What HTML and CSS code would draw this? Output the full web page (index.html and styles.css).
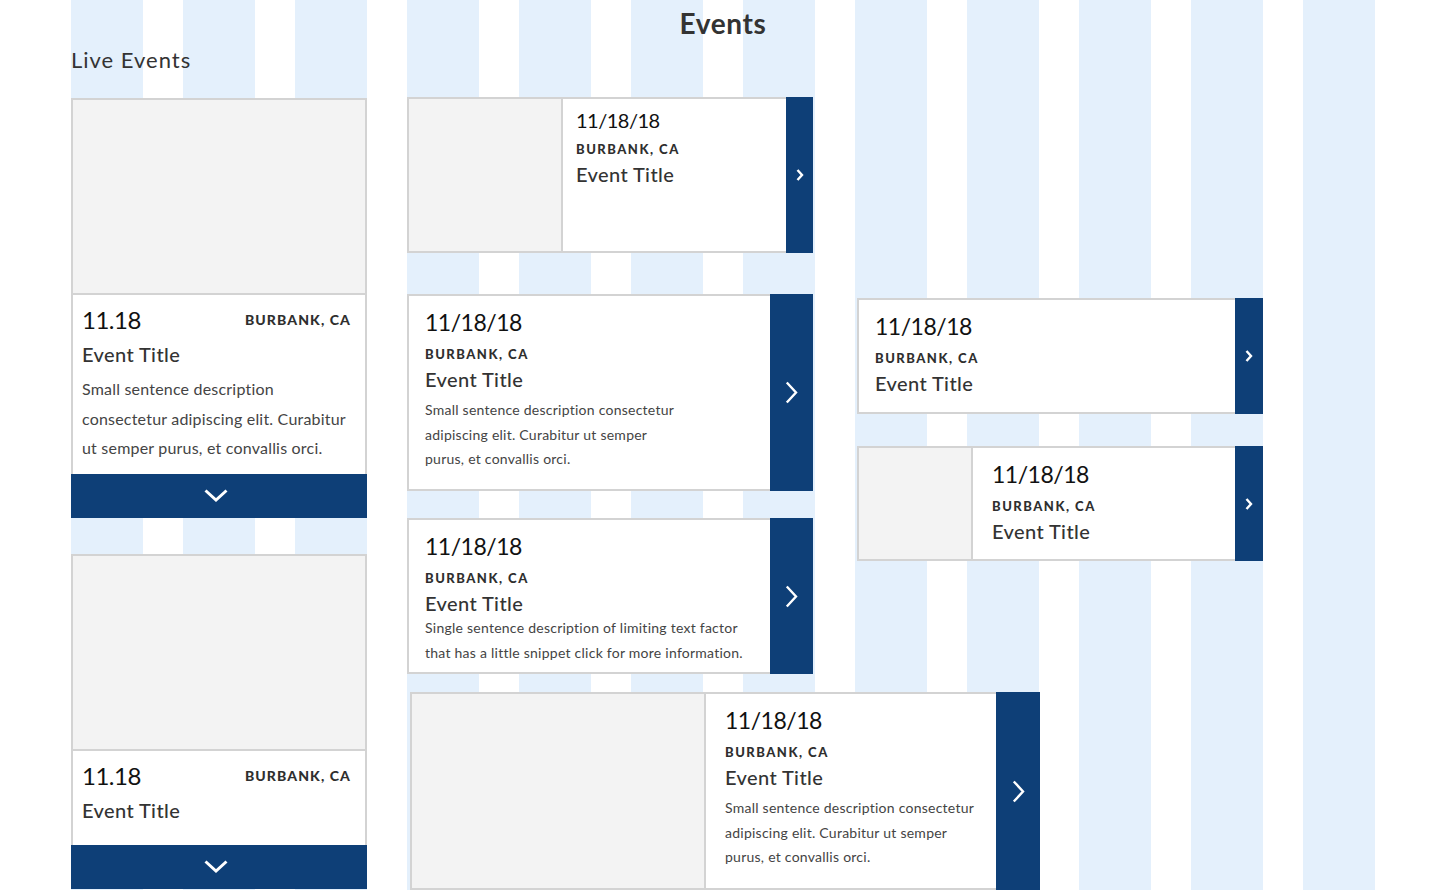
FILE: index.html
```html
<!DOCTYPE html>
<html lang="en">
<head>
<meta charset="utf-8">
<title>Events</title>
<link rel="stylesheet" href="styles.css">
</head>
<body>
<main class="page">
  <section class="col col-live">
    <h2 class="live-title">Live Events</h2>

    <article class="vcard">
      <div class="vcard-img"></div>
      <div class="vcard-body">
        <div class="vcard-meta"><span class="vdate">11.18</span><span class="loc vloc">BURBANK, CA</span></div>
        <h3 class="vtitle">Event Title</h3>
        <p class="vdesc">Small sentence description<br>consectetur adipiscing elit. Curabitur<br>ut semper purus, et convallis orci.</p>
      </div>
      <div class="vcard-toggle">
        <svg width="24" height="13" viewBox="0 0 24 13"><path d="M1.5 1.5 L12 11 L22.5 1.5" fill="none" stroke="#fff" stroke-width="3"/></svg>
      </div>
    </article>

    <article class="vcard vcard-second">
      <div class="vcard-img"></div>
      <div class="vcard-body">
        <div class="vcard-meta"><span class="vdate">11.18</span><span class="loc vloc">BURBANK, CA</span></div>
        <h3 class="vtitle">Event Title</h3>
      </div>
      <div class="vcard-toggle">
        <svg width="24" height="13" viewBox="0 0 24 13"><path d="M1.5 1.5 L12 11 L22.5 1.5" fill="none" stroke="#fff" stroke-width="3"/></svg>
      </div>
    </article>
  </section>

  <section class="col col-events">
    <h1 class="events-title">Events</h1>

    <article class="hcard hcard-a">
      <div class="hcard-main">
        <div class="hcard-img"></div>
        <div class="hcard-info">
          <div class="hdate">11/18/18</div>
          <div class="loc">BURBANK, CA</div>
          <h3 class="htitle">Event Title</h3>
        </div>
      </div>
      <div class="hcard-go">
        <svg width="8" height="12" viewBox="0 0 8 12"><path d="M1.5 1 L6 6 L1.5 11" fill="none" stroke="#fff" stroke-width="2.4"/></svg>
      </div>
    </article>

    <article class="hcard hcard-b">
      <div class="hcard-main">
        <div class="hcard-info">
          <div class="hdate">11/18/18</div>
          <div class="loc">BURBANK, CA</div>
          <h3 class="htitle">Event Title</h3>
          <p class="hdesc">Small sentence description consectetur<br>adipiscing elit. Curabitur ut semper<br>purus, et convallis orci.</p>
        </div>
      </div>
      <div class="hcard-go">
        <svg width="13" height="23" viewBox="0 0 13 23"><path d="M1.8 1.5 L11 11.5 L1.8 21.5" fill="none" stroke="#fff" stroke-width="2.4"/></svg>
      </div>
    </article>

    <article class="hcard hcard-c">
      <div class="hcard-main">
        <div class="hcard-info">
          <div class="hdate">11/18/18</div>
          <div class="loc">BURBANK, CA</div>
          <h3 class="htitle">Event Title</h3>
          <p class="hdesc">Single sentence description of limiting text factor<br>that has a little snippet click for more information.</p>
        </div>
      </div>
      <div class="hcard-go">
        <svg width="13" height="23" viewBox="0 0 13 23"><path d="M1.8 1.5 L11 11.5 L1.8 21.5" fill="none" stroke="#fff" stroke-width="2.4"/></svg>
      </div>
    </article>

    <article class="hcard hcard-d">
      <div class="hcard-main">
        <div class="hcard-img"></div>
        <div class="hcard-info">
          <div class="hdate">11/18/18</div>
          <div class="loc">BURBANK, CA</div>
          <h3 class="htitle">Event Title</h3>
          <p class="hdesc">Small sentence description consectetur<br>adipiscing elit. Curabitur ut semper<br>purus, et convallis orci.</p>
        </div>
      </div>
      <div class="hcard-go">
        <svg width="13" height="23" viewBox="0 0 13 23"><path d="M1.8 1.5 L11 11.5 L1.8 21.5" fill="none" stroke="#fff" stroke-width="2.4"/></svg>
      </div>
    </article>
  </section>

  <section class="col col-side">
    <article class="hcard hcard-e">
      <div class="hcard-main">
        <div class="hcard-info">
          <div class="hdate">11/18/18</div>
          <div class="loc">BURBANK, CA</div>
          <h3 class="htitle">Event Title</h3>
        </div>
      </div>
      <div class="hcard-go">
        <svg width="8" height="12" viewBox="0 0 8 12"><path d="M1.5 1 L6 6 L1.5 11" fill="none" stroke="#fff" stroke-width="2.4"/></svg>
      </div>
    </article>

    <article class="hcard hcard-f">
      <div class="hcard-main">
        <div class="hcard-img"></div>
        <div class="hcard-info">
          <div class="hdate">11/18/18</div>
          <div class="loc">BURBANK, CA</div>
          <h3 class="htitle">Event Title</h3>
        </div>
      </div>
      <div class="hcard-go">
        <svg width="8" height="12" viewBox="0 0 8 12"><path d="M1.5 1 L6 6 L1.5 11" fill="none" stroke="#fff" stroke-width="2.4"/></svg>
      </div>
    </article>
  </section>
</main>
</body>
</html>
```

FILE: styles.css
```css
* { box-sizing: border-box; }

html, body {
  margin: 0;
  padding: 0;
  overflow: hidden;
  background: #fff;
}

body {
  font-family: Lato, "Open Sans", sans-serif;
  color: #333;
}

.page {
  margin-left: 71px;
  width: 1304px;
  height: 890px;
  display: grid;
  grid-template-columns: repeat(12, 72px);
  column-gap: 40px;
  align-items: start;
  background: repeating-linear-gradient(90deg, #e4f0fc 0 72px, transparent 72px 112px);
}

.col-live { grid-column: 1 / span 3; grid-row: 1; }
.col-events { grid-column: 4 / span 6; grid-row: 1; }
.col-side { grid-column: 8 / span 4; grid-row: 1; padding-top: 298px; padding-left: 2px; }

/* headings */
.live-title {
  margin: 0 0 25px;
  padding-top: 47px;
  font-size: 22px;
  line-height: 26px;
  font-weight: 400;
  letter-spacing: 1px;
  color: #333;
}

.events-title {
  margin: 0 0 57px;
  padding-top: 6px;
  font-size: 28px;
  line-height: 34px;
  font-weight: 700;
  letter-spacing: 0.6px;
  text-align: center;
  color: #333;
}

/* shared location label */
.loc {
  font-size: 13px;
  line-height: 22px;
  font-weight: 900;
  letter-spacing: 1.5px;
  color: #2f2f2f;
  text-transform: uppercase;
}

/* vertical (live) cards */
.vcard { width: 296px; }
.vcard-second { margin-top: 36px; }

.vcard-img {
  height: 197px;
  background: #f3f3f3;
  border: 2px solid #d3d3d3;
}

.vcard-body {
  min-height: 94px;
  background: #fff;
  border-left: 2px solid #d3d3d3;
  border-right: 2px solid #d3d3d3;
  padding: 10px 14px 11px 9px;
}

.vcard-meta {
  display: flex;
  justify-content: space-between;
  align-items: center;
}

.vdate {
  font-size: 24px;
  line-height: 30px;
  letter-spacing: -0.5px;
  color: #111;
}

.vloc { font-size: 14px; letter-spacing: 1.1px; }

.vtitle {
  margin: 5px 0 6px;
  font-size: 20px;
  line-height: 28px;
  font-weight: 500;
  letter-spacing: 0.4px;
  color: #333;
}

.vdesc {
  margin: 0;
  font-size: 16px;
  line-height: 29.5px;
  letter-spacing: 0.2px;
  color: #444;
  white-space: nowrap;
}

.vcard-toggle {
  height: 44px;
  background: #0e3f77;
  display: flex;
  align-items: center;
  justify-content: center;
  padding-right: 6px;
}

/* horizontal cards */
.hcard {
  display: flex;
  width: 406px;
}

.hcard-main {
  flex: 1;
  display: flex;
  background: #fff;
  border: 2px solid #d3d3d3;
  border-right: 0;
}

.hcard-img {
  flex: none;
  background: #f3f3f3;
  border-right: 2px solid #d3d3d3;
}

.hcard-info {
  padding: 11px 0 0 16px;
}

.hcard-go {
  flex: none;
  width: 43px;
  background: #0e3f77;
  display: flex;
  align-items: center;
  justify-content: center;
}

.hdate {
  font-size: 23px;
  line-height: 30px;
  letter-spacing: -0.5px;
  color: #111;
}

.hcard .loc { margin-top: 6px; }

.htitle {
  margin: 1px 0 0;
  font-size: 20px;
  line-height: 26px;
  font-weight: 500;
  letter-spacing: 0.4px;
  color: #333;
}

.hdesc {
  margin: 6px 0 0;
  font-size: 14px;
  line-height: 24.5px;
  letter-spacing: 0.25px;
  color: #444;
  white-space: nowrap;
}

/* card A */
.hcard-a { height: 156px; }
.hcard-a .hcard-img { width: 154px; }
.hcard-a .hcard-info { padding: 8px 0 0 13px; }
.hcard-a .hdate { font-size: 20px; line-height: 27px; }
.hcard-a .loc { margin-top: 4px; }
.hcard-a .hcard-go { width: 27px; }

/* card B */
.hcard-b { height: 197px; margin-top: 41px; }

/* card C */
.hcard-c { height: 156px; margin-top: 27px; }
.hcard-c .hdesc { margin-top: 0; }

/* card D */
.hcard-d { width: 630px; height: 198px; margin-top: 18px; margin-left: 3px; }
.hcard-d .hcard-img { width: 294px; }
.hcard-d .hcard-info { padding-left: 19px; }
.hcard-d .hcard-go { width: 44px; }

/* right column cards */
.hcard-e { height: 116px; }
.hcard-e .hcard-go,
.hcard-f .hcard-go { width: 28px; }

.hcard-f { height: 115px; margin-top: 32px; }
.hcard-f .hcard-img { width: 114px; }
.hcard-f .hcard-info { padding-left: 19px; }
```
